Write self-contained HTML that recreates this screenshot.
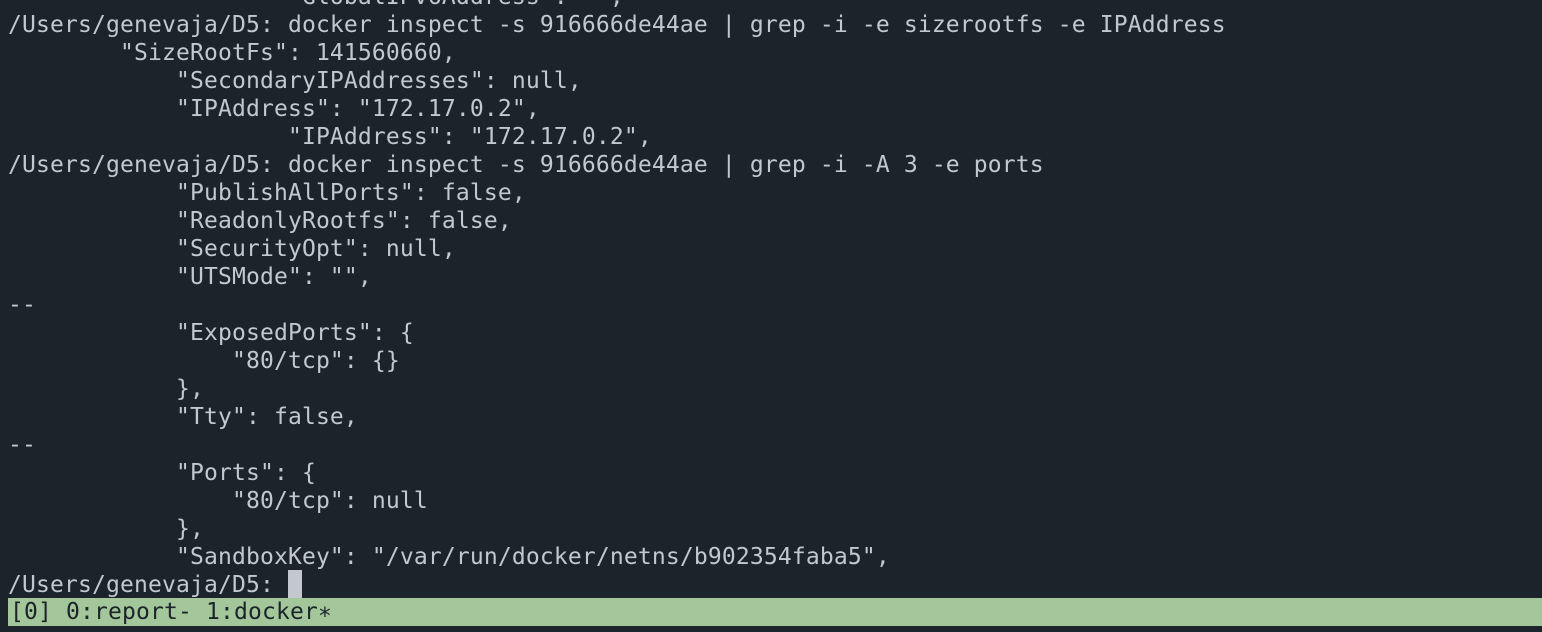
<!DOCTYPE html>
<html><head><style>
html,body{margin:0;padding:0;background:#1b242b;width:1542px;height:632px;overflow:hidden}
pre{position:absolute;left:8px;top:-17px;margin:0;font-family:"DejaVu Sans Mono","Liberation Mono",monospace;font-size:23px;letter-spacing:0.15px;line-height:28px;color:#c3c8cf;white-space:pre}
.cur{display:inline-block;width:14px;height:28px;background:#c3c8cf;vertical-align:top;margin-top:-1px}
.bar{position:absolute;left:8px;right:0;top:598px;height:28px;background:#a3c69a;color:#1b242b;font-family:"DejaVu Sans Mono","Liberation Mono",monospace;font-size:23px;letter-spacing:0.15px;line-height:28px;white-space:pre;padding-left:2px}
</style></head><body>
<pre>                    "GlobalIPv6Address": "",
/Users/genevaja/D5: docker inspect -s 916666de44ae | grep -i -e sizerootfs -e IPAddress
        "SizeRootFs": 141560660,
            "SecondaryIPAddresses": null,
            "IPAddress": "172.17.0.2",
                    "IPAddress": "172.17.0.2",
/Users/genevaja/D5: docker inspect -s 916666de44ae | grep -i -A 3 -e ports
            "PublishAllPorts": false,
            "ReadonlyRootfs": false,
            "SecurityOpt": null,
            "UTSMode": "",
--
            "ExposedPorts": {
                "80/tcp": {}
            },
            "Tty": false,
--
            "Ports": {
                "80/tcp": null
            },
            "SandboxKey": "/var/run/docker/netns/b902354faba5",
/Users/genevaja/D5: <span class="cur"></span></pre>
<div class="bar">[0] 0:report- 1:docker∗</div>
</body></html>
